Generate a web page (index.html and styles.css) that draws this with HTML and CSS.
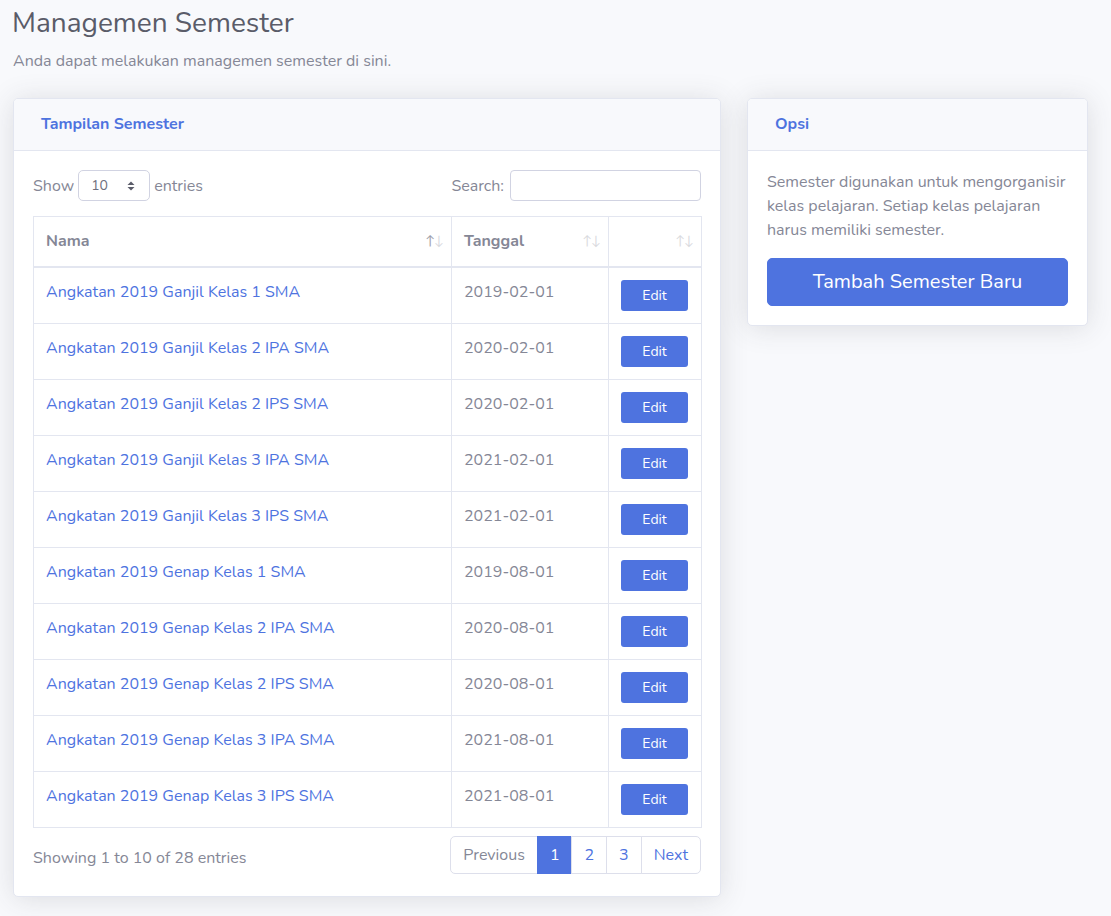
FILE: index.html
```html
<!DOCTYPE html>
<html lang="id">
<head>
<meta charset="utf-8">
<title>Managemen Semester</title>
<link rel="stylesheet" href="styles.css">
</head>
<body>
<div class="page">
  <h1 class="page-title">Managemen Semester</h1>
  <p class="page-sub">Anda dapat melakukan managemen semester di sini.</p>
  <div class="row">
    <div class="card card-main">
      <div class="card-header"><h6>Tampilan Semester</h6></div>
      <div class="card-body">
        <div class="dt-top">
          <label class="dt-length">Show
            <span class="select">10
              <svg class="caret" width="8" height="10" viewBox="0 0 8 10"><path d="M0.5 4L4 0.5L7.5 4Z" fill="#5a5c69"/><path d="M0.5 6L4 9.5L7.5 6Z" fill="#5a5c69"/></svg>
            </span>
          entries</label>
          <label class="dt-search">Search: <span class="input"></span></label>
        </div>
        <table class="dt">
          <colgroup><col class="c1"><col class="c2"><col class="c3"></colgroup>
          <thead>
            <tr>
              <th><span>Nama</span><span class="sort active"><b>↑</b><i>↓</i></span></th>
              <th><span>Tanggal</span><span class="sort"><b>↑</b><i>↓</i></span></th>
              <th><span></span><span class="sort"><b>↑</b><i>↓</i></span></th>
            </tr>
          </thead>
          <tbody>
            <tr><td><a>Angkatan 2019 Ganjil Kelas 1 SMA</a></td><td>2019-02-01</td><td><span class="btn-edit">Edit</span></td></tr>
            <tr><td><a>Angkatan 2019 Ganjil Kelas 2 IPA SMA</a></td><td>2020-02-01</td><td><span class="btn-edit">Edit</span></td></tr>
            <tr><td><a>Angkatan 2019 Ganjil Kelas 2 IPS SMA</a></td><td>2020-02-01</td><td><span class="btn-edit">Edit</span></td></tr>
            <tr><td><a>Angkatan 2019 Ganjil Kelas 3 IPA SMA</a></td><td>2021-02-01</td><td><span class="btn-edit">Edit</span></td></tr>
            <tr><td><a>Angkatan 2019 Ganjil Kelas 3 IPS SMA</a></td><td>2021-02-01</td><td><span class="btn-edit">Edit</span></td></tr>
            <tr><td><a>Angkatan 2019 Genap Kelas 1 SMA</a></td><td>2019-08-01</td><td><span class="btn-edit">Edit</span></td></tr>
            <tr><td><a>Angkatan 2019 Genap Kelas 2 IPA SMA</a></td><td>2020-08-01</td><td><span class="btn-edit">Edit</span></td></tr>
            <tr><td><a>Angkatan 2019 Genap Kelas 2 IPS SMA</a></td><td>2020-08-01</td><td><span class="btn-edit">Edit</span></td></tr>
            <tr><td><a>Angkatan 2019 Genap Kelas 3 IPA SMA</a></td><td>2021-08-01</td><td><span class="btn-edit">Edit</span></td></tr>
            <tr><td><a>Angkatan 2019 Genap Kelas 3 IPS SMA</a></td><td>2021-08-01</td><td><span class="btn-edit">Edit</span></td></tr>
          </tbody>
        </table>
        <div class="dt-bottom">
          <div class="dt-info">Showing 1 to 10 of 28 entries</div>
          <ul class="pagination">
            <li class="pg disabled">Previous</li>
            <li class="pg active">1</li>
            <li class="pg">2</li>
            <li class="pg">3</li>
            <li class="pg">Next</li>
          </ul>
        </div>
      </div>
    </div>
    <div class="card card-side">
      <div class="card-header"><h6>Opsi</h6></div>
      <div class="card-body side-body">
        <p class="side-text">Semester digunakan untuk mengorganisir kelas pelajaran. Setiap kelas pelajaran harus memiliki semester.</p>
        <span class="btn-lg">Tambah Semester Baru</span>
      </div>
    </div>
  </div>
</div>
</body>
</html>
```

FILE: styles.css
```css
* { box-sizing: border-box; }
html, body { margin: 0; padding: 0; }
body {
  background: #f8f9fc;
  font-family: "Nunito", "Lato", "Noto Sans", sans-serif;
  font-size: 16px;
  line-height: 1.5;
  color: #858796;
}
.page { padding: 7px 23px 20px 13px; }
.page-title {
  margin: 0 0 8px -1px;
  font-size: 28px;
  font-weight: 400;
  line-height: 1.2;
  color: #5a5c69;
}
.page-sub { margin: 0 0 25px 0; font-size: 16px; line-height: 24px; }
.row { display: grid; grid-template-columns: 708px 341px; column-gap: 26px; align-items: start; }
.card {
  background: #fff;
  border: 1px solid #e3e6f0;
  border-radius: 5px;
  box-shadow: 0 2px 28px 0 rgba(58, 59, 69, 0.15);
  overflow: hidden;
}
.card-header {
  background: #f8f9fc;
  border-bottom: 1px solid #e3e6f0;
  height: 52px;
  padding: 0 27px;
  display: flex;
  align-items: center;
}
.card-header h6 { margin: 0; font-size: 16px; font-weight: 700; color: #4e73df; }
.card-body { padding: 19px 19px 22px; }
.side-body { padding-bottom: 19px; }
.dt-top { display: flex; justify-content: space-between; align-items: center; height: 32px; margin-bottom: 14px; }
.dt-length, .dt-search { display: flex; align-items: center; font-size: 16px; }
.select {
  display: inline-flex; align-items: center; justify-content: space-between;
  width: 72px; height: 31px; margin: 0 4px;
  padding: 0 14px 0 12px;
  border: 1px solid #d1d3e2; border-radius: 5px;
  font-size: 14px; color: #6e707e;
}
.input { display: inline-block; width: 191px; height: 31px; margin-left: 6px; border: 1px solid #d1d3e2; border-radius: 4px; }
table.dt { width: 668px; border-collapse: collapse; table-layout: fixed; border: 1px solid #e3e6f0; }
col.c1 { width: 418px; } col.c2 { width: 157px; } col.c3 { width: 93px; }
table.dt th, table.dt td { border: 1px solid #e3e6f0; padding: 12px; vertical-align: top; text-align: left; line-height: 24px; }
table.dt thead th { border-bottom: 2px solid #e3e6f0; padding-bottom: 13px; font-weight: 700; color: #858796; font-size: 16px; }
table.dt th { position: relative; }
.sort { position: absolute; right: 8px; top: 12px; font-size: 13px; letter-spacing: -1px; color: #858796; }
.sort b, .sort i { font-weight: 400; font-style: normal; opacity: 0.3; }
.sort.active b { opacity: 0.8; }
.sort.active i { opacity: 0.3; }
table.dt td { font-size: 16px; }
table.dt td a { color: #4e73df; text-decoration: none; }
.btn-edit {
  display: block; width: 67px; height: 31px; line-height: 31px;
  background: #4e73df; color: #fff; border-radius: 3px;
  text-align: center; font-size: 14px;
}
.dt-bottom { display: flex; justify-content: space-between; align-items: flex-start; margin-top: 8px; }
.dt-info { padding-top: 10px; font-size: 16px; }
.pagination { display: flex; list-style: none; margin: 0; padding: 0; }
.pg {
  height: 38px; line-height: 36px; padding: 0 12px;
  border: 1px solid #dddfeb; margin-left: -1px;
  color: #4e73df; font-size: 16px; background: #fff;
}
.pg:first-child { border-radius: 5px 0 0 5px; margin-left: 0; }
.pg:last-child { border-radius: 0 5px 5px 0; }
.pg.disabled { color: #858796; }
.pg.active { background: #4e73df; border-color: #4e73df; color: #fff; }
.side-text { margin: 0 0 16px; font-size: 16px; line-height: 24px; }
.btn-lg {
  display: block; height: 48px; line-height: 46px;
  background: #4e73df; color: #fff; border: 1px solid #4e73df; border-radius: 5px;
  text-align: center; font-size: 20px;
}
```
